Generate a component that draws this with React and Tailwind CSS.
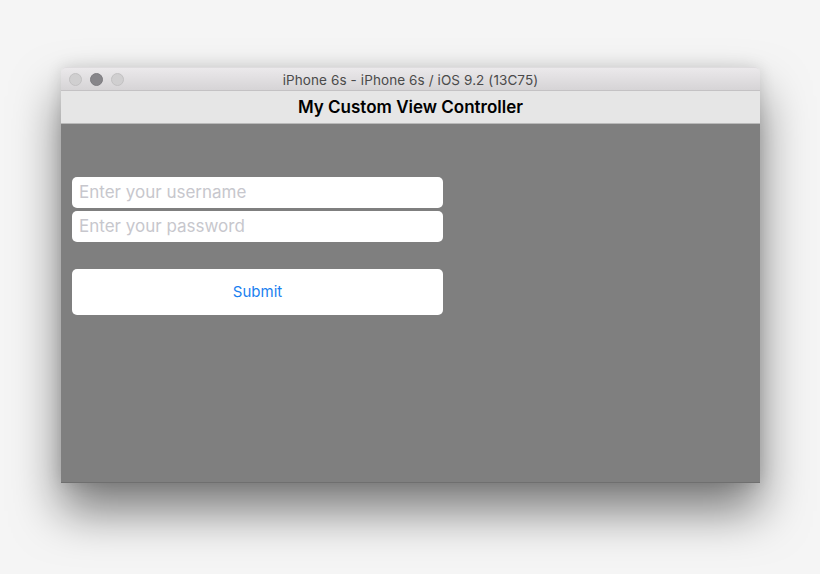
import React from "react";

export default function App() {
  return (
    <div className="w-[820px] h-[574px] bg-[#f5f5f5] overflow-hidden pt-[67px] pl-[61px]" style={{ fontFamily: "Inter, 'Noto Sans', sans-serif" }}>
      <div className="w-[699px] h-[416px] flex flex-col rounded-t-[5px] shadow-[0_28px_48px_rgba(0,0,0,0.5),0_0_16px_rgba(0,0,0,0.12)]">
        <div className="relative h-[24px] flex items-center justify-center pt-[2px] rounded-t-[5px] bg-gradient-to-b from-[#ebe9eb] to-[#d6d4d6] border-b border-[#c4c2c4] border-t border-t-[#dedcde]">
          <div className="absolute left-[8px] top-[5px] flex gap-[8px]">
            <div className="w-[13px] h-[13px] rounded-full bg-[#d0cfd0] border border-[#c2c1c2]" />
            <div className="w-[13px] h-[13px] rounded-full bg-[#87868a] border border-[#7d7c80]" />
            <div className="w-[13px] h-[13px] rounded-full bg-[#d0cfd0] border border-[#c2c1c2]" />
          </div>
          <span className="text-[13.5px] text-[#4a4a4a] tracking-[0.1px]">iPhone 6s - iPhone 6s / iOS 9.2 (13C75)</span>
        </div>
        <div className="h-[33px] bg-[#e6e6e6] border-b border-[#b9b9b9] flex items-center justify-center pt-[2px]">
          <span className="text-[17px] font-semibold text-black">My Custom View Controller</span>
        </div>
        <div className="flex-1 bg-[#7f7f7f] pt-[53px] pl-[11px] border-b border-[#6f6f6f]">
          <div className="w-[371px] flex flex-col">
            <div className="h-[31px] bg-white rounded-[5px] flex items-center px-[7px]">
              <span className="text-[17px] text-[#c7c7cd]">Enter your username</span>
            </div>
            <div className="h-[31px] mt-[3px] bg-white rounded-[5px] flex items-center px-[7px]">
              <span className="text-[17px] text-[#c7c7cd]">Enter your password</span>
            </div>
            <div className="h-[46px] mt-[27px] bg-white rounded-[5px] flex items-center justify-center">
              <span className="text-[15px] text-[#1a7ff0]">Submit</span>
            </div>
          </div>
        </div>
      </div>
    </div>
  );
}
